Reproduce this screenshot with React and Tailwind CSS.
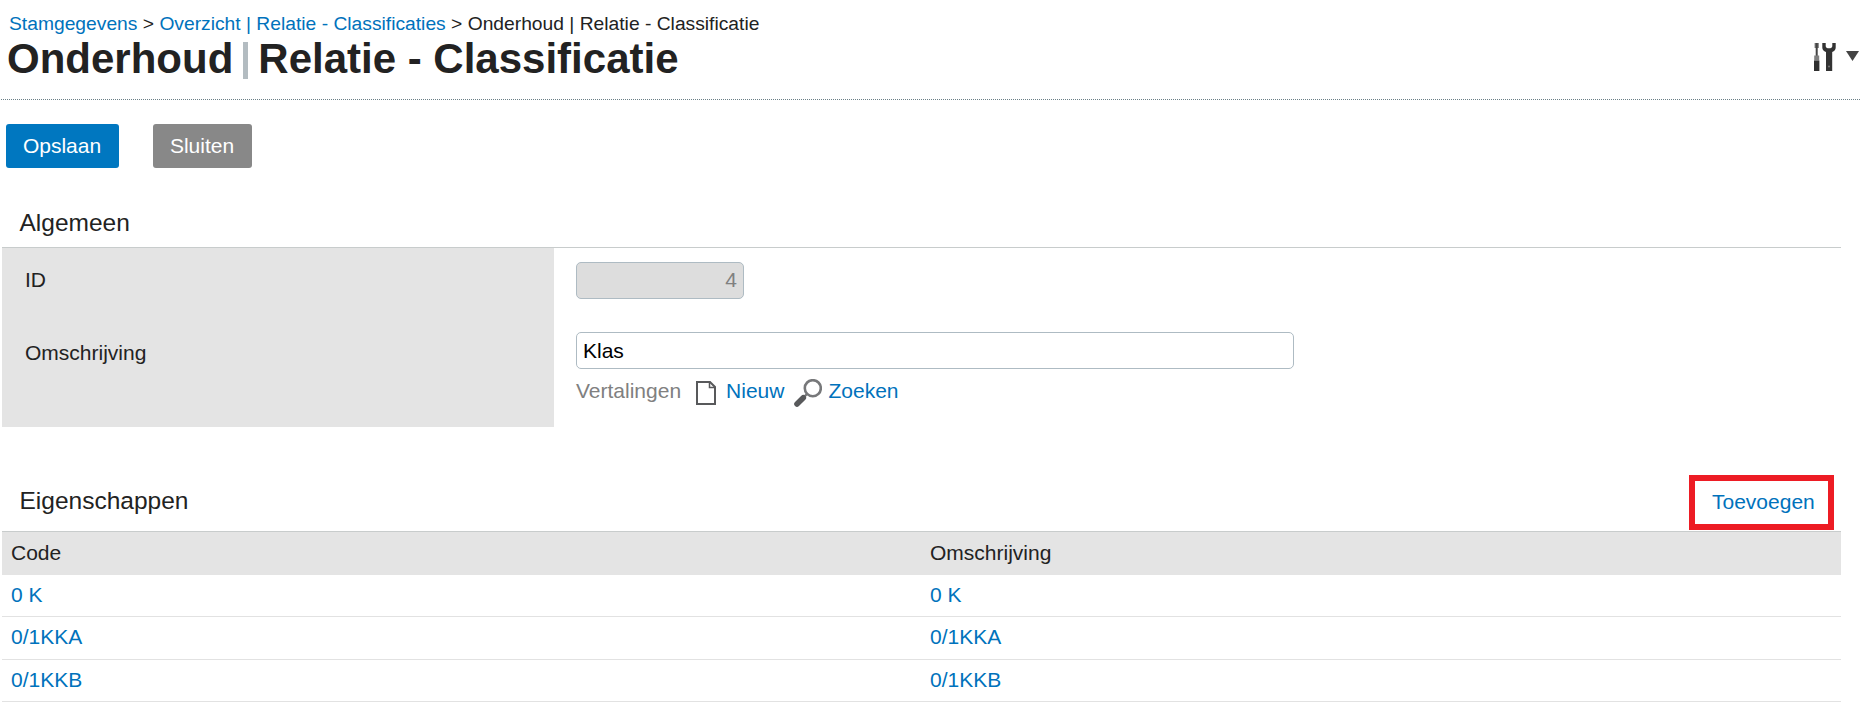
const rows = ["0 K", "0/1KKA", "0/1KKB"];
const rowHeights = ["h-[42px] pb-px", "h-[43px] pb-[3px]", "h-[42px] pb-px"];

function Link({ children, className = "" }) {
  return (
    <a href="#" className={`text-[#0072bc] ${className}`}>
      {children}
    </a>
  );
}

function ToolsIcon() {
  return (
    <svg width="22" height="28" viewBox="0 0 22 28" className="shrink-0">
      <rect x="0.6" y="0" width="4.2" height="5" fill="#777" />
      <rect x="1.700" y="0" width="2" height="13" fill="#444" />
      <rect x="0.2" y="12.500" width="5" height="5" fill="#808080" />
      <rect x="0" y="17.500" width="5.400" height="10.500" fill="#2f2f2f" />
      <path
        d="M8.300 0h3.400v3c0 1.500 1.200 2.300 3.300 2.300S18.300 4.500 18.300 3V0h3.400v4.500c0 2.300-1.200 3.700-3.500 4.500V28H12V9C9.600 8.200 8.300 6.800 8.300 4.500z"
        fill="#333"
      />
      <circle cx="15" cy="23.500" r="1" fill="#777" />
    </svg>
  );
}

function PageIcon() {
  return (
    <svg width="20" height="24" viewBox="0 0 20 24" fill="none" className="shrink-0">
      <path d="M1 1h13l5 5v17H1z" stroke="#58595b" strokeWidth="2" />
      <path d="M13.500 1v5.500H19" stroke="#58595b" strokeWidth="1.500" />
    </svg>
  );
}

function SearchIcon() {
  return (
    <svg width="28" height="28" viewBox="0 0 28 28" fill="none" className="shrink-0">
      <circle cx="18.800" cy="9.200" r="8" stroke="#77787a" strokeWidth="2.600" />
      <path d="M13 15l-3 3" stroke="#77787a" strokeWidth="2.400" />
      <path d="M9.300 18.700L3 25" stroke="#58595b" strokeWidth="5.600" strokeLinecap="round" />
    </svg>
  );
}

export default function App() {
  return (
    <div className="h-[709px] w-full overflow-hidden bg-white pl-[2px] font-['Liberation_Sans',Arial,sans-serif] text-[21px] leading-6 text-[#222]">
      <header className="-ml-px flex h-[100px] w-[1859px] justify-between border-b border-dotted border-[#6b7f86]">
        <div className="pl-2 pt-3">
          <nav className="h-6 whitespace-pre text-[19.260px]">
            <Link>Stamgegevens</Link>
            {" > "}
            <Link>Overzicht | Relatie - Classificaties</Link>
            {" > Onderhoud | Relatie - Classificatie"}
          </nav>
          <h1 className="-ml-[2px] flex h-[45px] items-center whitespace-nowrap pt-px text-[42px] font-bold leading-[44px]">
            <span>Onderhoud</span>
            <span className="mt-[3px] ml-[10px] mr-[10px] h-[37px] w-[5px] bg-[#b3bcc1]" />
            <span>Relatie - Classificatie</span>
          </h1>
        </div>
        <div className="flex items-start gap-[10px] pr-px pt-[43px]">
          <ToolsIcon />
          <svg width="13" height="10" viewBox="0 0 13 10" className="mt-2">
            <path d="M0 0h13L6.500 10z" fill="#444" />
          </svg>
        </div>
      </header>

      <div className="flex gap-[34px] pl-1 pt-6">
        <button className="h-[44px] w-[113px] rounded-[3px] bg-[#0077c0] pr-px text-white">Opslaan</button>
        <button className="h-[44px] w-[99px] rounded-[3px] bg-[#888] pr-px text-white">Sluiten</button>
      </div>

      <section className="w-[1839px] pt-[39px]">
        <h2 className="h-[41px] border-b border-[#c8cccc] pl-[17.500px] pt-px text-[24.500px] leading-[30px]">Algemeen</h2>
        <div className="flex h-[179px]">
          <div className="w-[552px] bg-[#e4e4e4] pl-[23px] pt-5">
            <div className="h-[73px]">ID</div>
            <div>Omschrijving</div>
          </div>
          <div className="pl-[22px] pt-[14px]">
            <div className="flex h-[37px] w-[168px] items-center justify-end rounded-[5px] border border-[#aebbc3] bg-[#ddd] pb-[2px] pr-[6px] text-[#808080]">
              4
            </div>
            <div className="mt-[33px] flex h-[37px] w-[718px] items-center rounded-[5px] border border-[#aebbc3] pl-[6px] text-black">
              Klas
            </div>
            <div className="mt-[9px] flex h-[30px] items-center text-[#808080]">
              <span className="mr-[15px] -mt-[4px]">Vertalingen</span>
              <PageIcon />
              <Link className="-mt-[4px] ml-[10px] mr-[10px]">Nieuw</Link>
              <SearchIcon />
              <Link className="-mt-[4px] ml-[6px]">Zoeken</Link>
            </div>
          </div>
        </div>
      </section>

      <section className="mt-12 w-[1839px]">
        <div className="flex h-[57px] justify-between border-b border-[#c8cccc] pl-[17.500px] pr-[7px]">
          <h2 className="pt-[11px] text-[24.500px] leading-[30px]">Eigenschappen</h2>
          <div className="h-[55px] w-[145px] border-[6px] border-[#ed1c24] pl-[17px] pt-[9px]">
            <Link>Toevoegen</Link>
          </div>
        </div>
        <div className="grid h-[43px] grid-cols-2 items-center bg-[#e4e4e4] pb-[2px] pl-[9px]">
          <span>Code</span>
          <span className="ml-[4px]">Omschrijving</span>
        </div>
        {rows.map((value, i) => (
          <div key={value} className={`grid grid-cols-2 items-center border-b border-[#e2e2e2] pl-[9px] ${rowHeights[i]}`}>
            <Link>{value}</Link>
            <Link className="ml-[4px]">{value}</Link>
          </div>
        ))}
      </section>
    </div>
  );
}
